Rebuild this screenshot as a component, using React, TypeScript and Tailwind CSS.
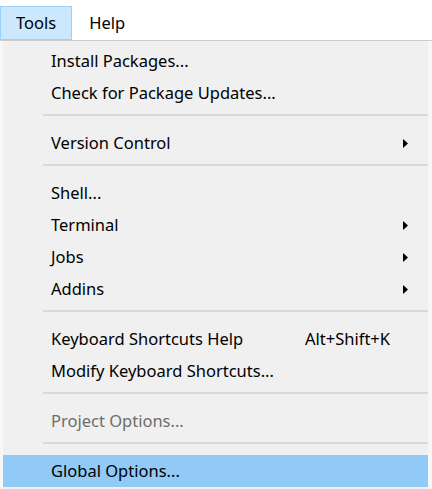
import { ReactNode } from "react";

type Item =
  | { kind: "item"; label: string; shortcut?: string; submenu?: boolean; disabled?: boolean; active?: boolean }
  | { kind: "sep" };

const items: Item[] = [
  { kind: "item", label: "Install Packages..." },
  { kind: "item", label: "Check for Package Updates..." },
  { kind: "sep" },
  { kind: "item", label: "Version Control", submenu: true },
  { kind: "sep" },
  { kind: "item", label: "Shell..." },
  { kind: "item", label: "Terminal", submenu: true },
  { kind: "item", label: "Jobs", submenu: true },
  { kind: "item", label: "Addins", submenu: true },
  { kind: "sep" },
  { kind: "item", label: "Keyboard Shortcuts Help", shortcut: "Alt+Shift+K" },
  { kind: "item", label: "Modify Keyboard Shortcuts..." },
  { kind: "sep" },
  { kind: "item", label: "Project Options...", disabled: true },
  { kind: "sep" },
  { kind: "item", label: "Global Options...", active: true },
];

const Arrow = () => (
  <svg width="5" height="9" viewBox="0 0 5 9" className="block">
    <path d="M0 0 L5 4.5 L0 9 Z" fill="#000" />
  </svg>
);

const MenuTab = ({ children, open }: { children: ReactNode; open?: boolean }) => (
  <div
    className={
      open
        ? "flex h-[34px] items-center border border-[#99d1ff] bg-[#cce8ff] px-[15px]"
        : "flex h-[34px] items-center border border-transparent px-[16px]"
    }
  >
    {children}
  </div>
);

export default function App() {
  return (
    <div
      className="h-[489px] w-[432px] overflow-hidden bg-white text-[16.5px] text-black"
      style={{ fontFamily: '"Noto Sans", "Open Sans", sans-serif' }}
    >
      <div className="flex h-[41px] items-end border-b border-[#cccccc] bg-white">
        <MenuTab open>Tools</MenuTab>
        <MenuTab>Help</MenuTab>
      </div>

      <div className="flex h-[448px] bg-[#f7f7f7] pl-[3px] pr-[4px]">
        <div className="flex-1 bg-[#f0f0f0] pt-[4px]">
          {items.map((it, i) =>
            it.kind === "sep" ? (
              <div key={i} className="h-[18px] pl-[40px] pt-[5px]">
                <div className="h-[2px] bg-[#d9d9d9]" />
              </div>
            ) : (
              <div
                key={i}
                className={
                  "flex h-[32px] items-center pl-[48px] pr-[20px] " +
                  (it.active ? "bg-[#91c9f7] " : "") +
                  (it.disabled ? "text-[#6d6d6d]" : "text-black")
                }
              >
                <span className={(it.shortcut ? "w-[254px] " : "flex-1 ") + "leading-none"}>{it.label}</span>
                {it.shortcut && <span className="flex-1 leading-none">{it.shortcut}</span>}
                {it.submenu && <Arrow />}
              </div>
            ),
          )}
        </div>
      </div>
    </div>
  );
}
